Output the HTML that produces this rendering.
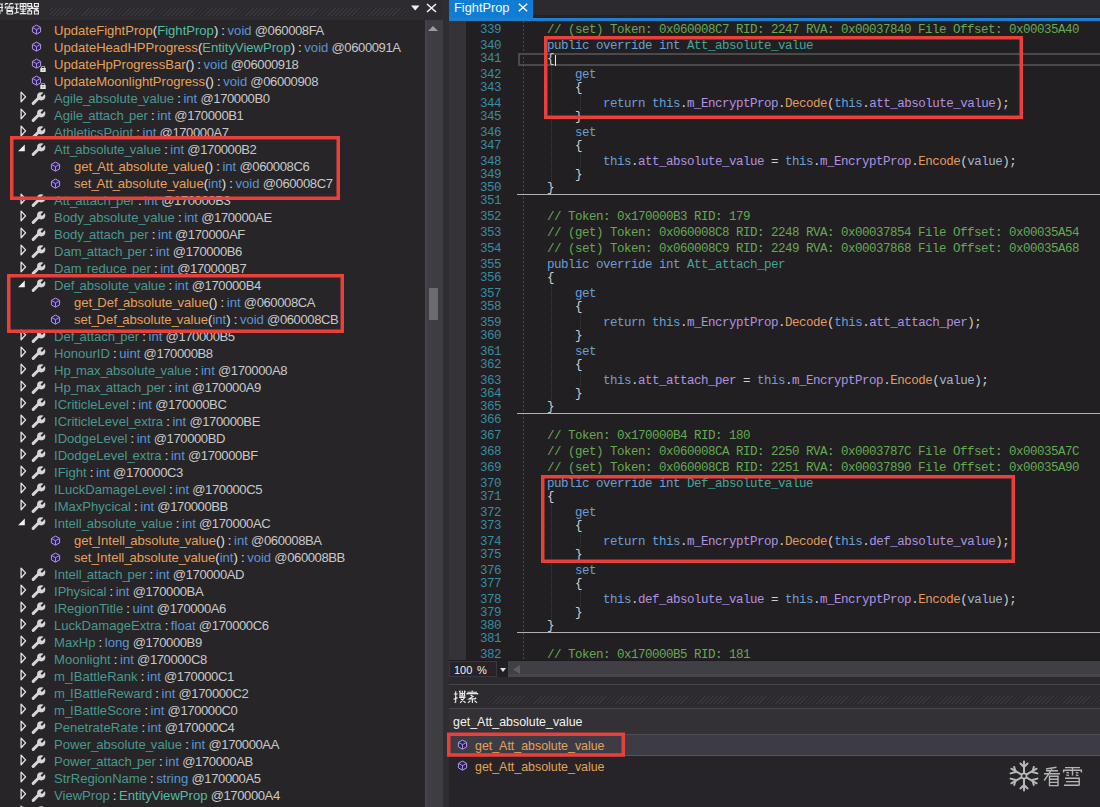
<!DOCTYPE html>
<html><head><meta charset="utf-8"><style>
html,body{margin:0;padding:0}
body{width:1100px;height:807px;overflow:hidden;position:relative;background:#272528;font-family:"Liberation Sans",sans-serif}
.a{position:absolute}
svg{display:block}
.tr{position:absolute;height:17px;line-height:17px;font-size:12.4px;white-space:pre;color:#E0E0E0;transform:scaleX(1.055);transform-origin:0 0}
.u{letter-spacing:-2px} .tk{letter-spacing:-0.4px} .co{letter-spacing:-0.5px}
.p{color:#4A988E} .m{color:#E5A15A} .k{color:#5A95D6} .t{color:#55BBA2} .n{color:#C8C8C8} .w{color:#E0E0E0}
.cl{position:absolute;left:0;width:651px;font-family:"Liberation Mono",monospace;font-size:12.5px;letter-spacing:-0.5px;line-height:12px;white-space:pre}
.cl.t{padding-top:3px;box-sizing:border-box}
.lnn{position:absolute;left:30px;width:22px;text-align:right;color:#3A8CA3}
.ct{position:absolute;left:98px}
.cm{color:#66A853} .kw{color:#6A9FD2} .pp{color:#45A597} .pu{color:#CFCFCF} .fd{color:#B092E0} .me{color:#E39C5E} .va{color:#A0B4C8}
</style></head><body>
<!-- left title -->
<div class="a" style="left:0;top:0;width:443px;height:20px;background:#2D2B30"></div>
<svg class="a" style="left:0;top:0" width="42" height="18" viewBox="0 0 42 18"><g fill="none" stroke="#EDEDED" stroke-width="1.15">
<path d="M0 4 H3 M0 7.5 H3 M2 4 V11 M0 11 H3 M0.5 12.5 L-0.5 14"/>
<path d="M6 3 L5 5 M6 3.6 H8.2 M10.5 3 L9.5 5 M10.5 3.6 H13.2 M9.2 5.2 V6.5 M5.3 8.5 V7 H13.3 V8.5 M7 8.2 V14 M7 8.2 H12 V10.6 H7 M7 11.3 H12.6 V14 H7"/>
<path d="M14.6 4 H18.8 M14.8 8.3 H18.6 M16.7 4 V12.6 M14.5 13.4 L19 12 M20.2 3.6 H26 V9.2 H20.2 Z M20.2 6.4 H26 M23.1 3.6 V13.6 M20.6 11.2 H25.6 M19.8 13.6 H26.6"/>
<path d="M27.8 3.5 H31.6 V6.4 H27.8 Z M34.4 3.5 H38.4 V6.4 H34.4 Z M27.3 8.3 H38.7 M33 6.8 L28.6 10.2 M33.4 8.4 L38.2 10.2 M36.4 6.6 L37.4 7.4 M27.8 10.8 H31.6 V14 H27.8 Z M34.4 10.8 H38.4 V14 H34.4 Z"/>
</g></svg>
<div class="a" style="left:50px;top:8px;width:356px;height:8px;background-image:repeating-linear-gradient(-45deg,#39373C 0 1.2px,#2A282D 1.2px 2.9px);"></div>
<svg class="a" style="left:411px;top:5px" width="9" height="6" viewBox="0 0 9 6"><path d="M0 0.5 H8.5 L4.25 5.5 Z" fill="#F0F0F0"/></svg>
<svg class="a" style="left:426px;top:3px" width="11" height="10" viewBox="0 0 11 10"><path d="M1 1 L10 9 M10 1 L1 9" stroke="#F0F0F0" stroke-width="1.6"/></svg>
<!-- tree -->
<div class="a" style="left:0;top:20px;width:425px;height:787px;overflow:hidden">
<div class="a" style="left:0;top:-20px;width:425px;height:807px"><div class="a" style="left:31px;top:24px"><svg class="ic" width="11" height="11" viewBox="0 0 11 11"><path d="M5.5 1.1 L9.6 3.4 L9.6 7.9 L5.5 10.2 L1.4 7.9 L1.4 3.4 Z" fill="#2F1E5E" stroke="#B39AE4" stroke-width="1"/><path d="M1.8 3.6 L5.5 5.7 L9.2 3.6 M5.5 5.7 L5.5 9.8" fill="none" stroke="#B39AE4" stroke-width="0.9"/></svg></div><div class="tr" style="left:54px;top:23px"><span class="m">UpdateFightProp</span><span class="w">(</span><span class="t">FightProp</span><span class="w">)</span><span class="w co"> : </span><span class="k">void</span><span class="n tk"> @060008FA</span></div><div class="a" style="left:31px;top:41px"><svg class="ic" width="11" height="11" viewBox="0 0 11 11"><path d="M5.5 1.1 L9.6 3.4 L9.6 7.9 L5.5 10.2 L1.4 7.9 L1.4 3.4 Z" fill="#2F1E5E" stroke="#B39AE4" stroke-width="1"/><path d="M1.8 3.6 L5.5 5.7 L9.2 3.6 M5.5 5.7 L5.5 9.8" fill="none" stroke="#B39AE4" stroke-width="0.9"/></svg></div><div class="tr" style="left:54px;top:40px"><span class="m">UpdateHeadHPProgress</span><span class="w">(</span><span class="t">EntityViewProp</span><span class="w">)</span><span class="w co"> : </span><span class="k">void</span><span class="n tk"> @0600091A</span></div><div class="a" style="left:31px;top:58px"><svg class="ic" width="11" height="11" viewBox="0 0 11 11"><path d="M5.5 1.1 L9.6 3.4 L9.6 7.9 L5.5 10.2 L1.4 7.9 L1.4 3.4 Z" fill="#2F1E5E" stroke="#B39AE4" stroke-width="1"/><path d="M1.8 3.6 L5.5 5.7 L9.2 3.6 M5.5 5.7 L5.5 9.8" fill="none" stroke="#B39AE4" stroke-width="0.9"/></svg></div><div class="a" style="left:40px;top:66px"><svg width="6" height="6" viewBox="0 0 6 6"><rect x="0.3" y="2" width="5.4" height="4" fill="#E6E6E6"/><path d="M1.4 2.2 V1.4 A1.6 1.4 0 0 1 4.6 1.4 V2.2" fill="none" stroke="#E6E6E6" stroke-width="0.9"/><rect x="2.5" y="3.4" width="1" height="1" fill="#333"/></svg></div><div class="tr" style="left:54px;top:57px"><span class="m">UpdateHpProgressBar</span><span class="w">()</span><span class="w co"> : </span><span class="k">void</span><span class="n tk"> @06000918</span></div><div class="a" style="left:31px;top:75px"><svg class="ic" width="11" height="11" viewBox="0 0 11 11"><path d="M5.5 1.1 L9.6 3.4 L9.6 7.9 L5.5 10.2 L1.4 7.9 L1.4 3.4 Z" fill="#2F1E5E" stroke="#B39AE4" stroke-width="1"/><path d="M1.8 3.6 L5.5 5.7 L9.2 3.6 M5.5 5.7 L5.5 9.8" fill="none" stroke="#B39AE4" stroke-width="0.9"/></svg></div><div class="a" style="left:40px;top:83px"><svg width="6" height="6" viewBox="0 0 6 6"><rect x="0.3" y="2" width="5.4" height="4" fill="#E6E6E6"/><path d="M1.4 2.2 V1.4 A1.6 1.4 0 0 1 4.6 1.4 V2.2" fill="none" stroke="#E6E6E6" stroke-width="0.9"/><rect x="2.5" y="3.4" width="1" height="1" fill="#333"/></svg></div><div class="tr" style="left:54px;top:74px"><span class="m">UpdateMoonlightProgress</span><span class="w">()</span><span class="w co"> : </span><span class="k">void</span><span class="n tk"> @06000908</span></div><div class="a" style="left:20px;top:91px"><svg width="7" height="12" viewBox="0 0 7 12"><path d="M1.1 1.1 L5.6 5.9 L1.1 10.7 Z" fill="none" stroke="#E8E8E8" stroke-width="1.3" stroke-linejoin="round"/></svg></div><div class="a" style="left:31px;top:91px"><svg width="15" height="15" viewBox="0 0 15 15"><path d="M2.2 12.4 L7.6 7" stroke="#D6D6D6" stroke-width="3.1" stroke-linecap="round"/><circle cx="10.2" cy="5.3" r="4.1" fill="#D6D6D6"/><path d="M10.3 5.2 L14.8 0.7" stroke="#272528" stroke-width="2"/></svg></div><div class="tr" style="left:54px;top:91px"><span class="p">Agile<span class="u">_</span>absolute<span class="u">_</span>value</span><span class="w co"> : </span><span class="k">int</span><span class="n tk"> @170000B0</span></div><div class="a" style="left:20px;top:108px"><svg width="7" height="12" viewBox="0 0 7 12"><path d="M1.1 1.1 L5.6 5.9 L1.1 10.7 Z" fill="none" stroke="#E8E8E8" stroke-width="1.3" stroke-linejoin="round"/></svg></div><div class="a" style="left:31px;top:108px"><svg width="15" height="15" viewBox="0 0 15 15"><path d="M2.2 12.4 L7.6 7" stroke="#D6D6D6" stroke-width="3.1" stroke-linecap="round"/><circle cx="10.2" cy="5.3" r="4.1" fill="#D6D6D6"/><path d="M10.3 5.2 L14.8 0.7" stroke="#272528" stroke-width="2"/></svg></div><div class="tr" style="left:54px;top:108px"><span class="p">Agile<span class="u">_</span>attach<span class="u">_</span>per</span><span class="w co"> : </span><span class="k">int</span><span class="n tk"> @170000B1</span></div><div class="a" style="left:20px;top:125px"><svg width="7" height="12" viewBox="0 0 7 12"><path d="M1.1 1.1 L5.6 5.9 L1.1 10.7 Z" fill="none" stroke="#E8E8E8" stroke-width="1.3" stroke-linejoin="round"/></svg></div><div class="a" style="left:31px;top:125px"><svg width="15" height="15" viewBox="0 0 15 15"><path d="M2.2 12.4 L7.6 7" stroke="#D6D6D6" stroke-width="3.1" stroke-linecap="round"/><circle cx="10.2" cy="5.3" r="4.1" fill="#D6D6D6"/><path d="M10.3 5.2 L14.8 0.7" stroke="#272528" stroke-width="2"/></svg></div><div class="tr" style="left:54px;top:125px"><span class="p">AthleticsPoint</span><span class="w co"> : </span><span class="k">int</span><span class="n tk"> @170000A7</span></div><div class="a" style="left:18px;top:143.5px"><svg width="8" height="8" viewBox="0 0 8 8"><path d="M6.8 0.5 L6.8 7.2 L0.1 7.2 Z" fill="#F2F2F2"/></svg></div><div class="a" style="left:31px;top:142px"><svg width="15" height="15" viewBox="0 0 15 15"><path d="M2.2 12.4 L7.6 7" stroke="#D6D6D6" stroke-width="3.1" stroke-linecap="round"/><circle cx="10.2" cy="5.3" r="4.1" fill="#D6D6D6"/><path d="M10.3 5.2 L14.8 0.7" stroke="#272528" stroke-width="2"/></svg></div><div class="tr" style="left:54px;top:142px"><span class="p">Att<span class="u">_</span>absolute<span class="u">_</span>value</span><span class="w co"> : </span><span class="k">int</span><span class="n tk"> @170000B2</span></div><div class="a" style="left:50px;top:161px"><svg class="ic" width="11" height="11" viewBox="0 0 11 11"><path d="M5.5 1.1 L9.6 3.4 L9.6 7.9 L5.5 10.2 L1.4 7.9 L1.4 3.4 Z" fill="#2F1E5E" stroke="#B39AE4" stroke-width="1"/><path d="M1.8 3.6 L5.5 5.7 L9.2 3.6 M5.5 5.7 L5.5 9.8" fill="none" stroke="#B39AE4" stroke-width="0.9"/></svg></div><div class="tr" style="left:74px;top:159px"><span class="m">get<span class="u">_</span>Att<span class="u">_</span>absolute<span class="u">_</span>value</span><span class="w">()</span><span class="w co"> : </span><span class="k">int</span><span class="n tk"> @060008C6</span></div><div class="a" style="left:50px;top:178px"><svg class="ic" width="11" height="11" viewBox="0 0 11 11"><path d="M5.5 1.1 L9.6 3.4 L9.6 7.9 L5.5 10.2 L1.4 7.9 L1.4 3.4 Z" fill="#2F1E5E" stroke="#B39AE4" stroke-width="1"/><path d="M1.8 3.6 L5.5 5.7 L9.2 3.6 M5.5 5.7 L5.5 9.8" fill="none" stroke="#B39AE4" stroke-width="0.9"/></svg></div><div class="tr" style="left:74px;top:176px"><span class="m">set<span class="u">_</span>Att<span class="u">_</span>absolute<span class="u">_</span>value</span><span class="w">(</span><span class="k">int</span><span class="w">)</span><span class="w co"> : </span><span class="k">void</span><span class="n tk"> @060008C7</span></div><div class="a" style="left:20px;top:193px"><svg width="7" height="12" viewBox="0 0 7 12"><path d="M1.1 1.1 L5.6 5.9 L1.1 10.7 Z" fill="none" stroke="#E8E8E8" stroke-width="1.3" stroke-linejoin="round"/></svg></div><div class="a" style="left:31px;top:193px"><svg width="15" height="15" viewBox="0 0 15 15"><path d="M2.2 12.4 L7.6 7" stroke="#D6D6D6" stroke-width="3.1" stroke-linecap="round"/><circle cx="10.2" cy="5.3" r="4.1" fill="#D6D6D6"/><path d="M10.3 5.2 L14.8 0.7" stroke="#272528" stroke-width="2"/></svg></div><div class="tr" style="left:54px;top:193px"><span class="p">Att<span class="u">_</span>attach<span class="u">_</span>per</span><span class="w co"> : </span><span class="k">int</span><span class="n tk"> @170000B3</span></div><div class="a" style="left:20px;top:210px"><svg width="7" height="12" viewBox="0 0 7 12"><path d="M1.1 1.1 L5.6 5.9 L1.1 10.7 Z" fill="none" stroke="#E8E8E8" stroke-width="1.3" stroke-linejoin="round"/></svg></div><div class="a" style="left:31px;top:210px"><svg width="15" height="15" viewBox="0 0 15 15"><path d="M2.2 12.4 L7.6 7" stroke="#D6D6D6" stroke-width="3.1" stroke-linecap="round"/><circle cx="10.2" cy="5.3" r="4.1" fill="#D6D6D6"/><path d="M10.3 5.2 L14.8 0.7" stroke="#272528" stroke-width="2"/></svg></div><div class="tr" style="left:54px;top:210px"><span class="p">Body<span class="u">_</span>absolute<span class="u">_</span>value</span><span class="w co"> : </span><span class="k">int</span><span class="n tk"> @170000AE</span></div><div class="a" style="left:20px;top:227px"><svg width="7" height="12" viewBox="0 0 7 12"><path d="M1.1 1.1 L5.6 5.9 L1.1 10.7 Z" fill="none" stroke="#E8E8E8" stroke-width="1.3" stroke-linejoin="round"/></svg></div><div class="a" style="left:31px;top:227px"><svg width="15" height="15" viewBox="0 0 15 15"><path d="M2.2 12.4 L7.6 7" stroke="#D6D6D6" stroke-width="3.1" stroke-linecap="round"/><circle cx="10.2" cy="5.3" r="4.1" fill="#D6D6D6"/><path d="M10.3 5.2 L14.8 0.7" stroke="#272528" stroke-width="2"/></svg></div><div class="tr" style="left:54px;top:227px"><span class="p">Body<span class="u">_</span>attach<span class="u">_</span>per</span><span class="w co"> : </span><span class="k">int</span><span class="n tk"> @170000AF</span></div><div class="a" style="left:20px;top:244px"><svg width="7" height="12" viewBox="0 0 7 12"><path d="M1.1 1.1 L5.6 5.9 L1.1 10.7 Z" fill="none" stroke="#E8E8E8" stroke-width="1.3" stroke-linejoin="round"/></svg></div><div class="a" style="left:31px;top:244px"><svg width="15" height="15" viewBox="0 0 15 15"><path d="M2.2 12.4 L7.6 7" stroke="#D6D6D6" stroke-width="3.1" stroke-linecap="round"/><circle cx="10.2" cy="5.3" r="4.1" fill="#D6D6D6"/><path d="M10.3 5.2 L14.8 0.7" stroke="#272528" stroke-width="2"/></svg></div><div class="tr" style="left:54px;top:244px"><span class="p">Dam<span class="u">_</span>attach<span class="u">_</span>per</span><span class="w co"> : </span><span class="k">int</span><span class="n tk"> @170000B6</span></div><div class="a" style="left:20px;top:261px"><svg width="7" height="12" viewBox="0 0 7 12"><path d="M1.1 1.1 L5.6 5.9 L1.1 10.7 Z" fill="none" stroke="#E8E8E8" stroke-width="1.3" stroke-linejoin="round"/></svg></div><div class="a" style="left:31px;top:261px"><svg width="15" height="15" viewBox="0 0 15 15"><path d="M2.2 12.4 L7.6 7" stroke="#D6D6D6" stroke-width="3.1" stroke-linecap="round"/><circle cx="10.2" cy="5.3" r="4.1" fill="#D6D6D6"/><path d="M10.3 5.2 L14.8 0.7" stroke="#272528" stroke-width="2"/></svg></div><div class="tr" style="left:54px;top:261px"><span class="p">Dam<span class="u">_</span>reduce<span class="u">_</span>per</span><span class="w co"> : </span><span class="k">int</span><span class="n tk"> @170000B7</span></div><div class="a" style="left:18px;top:279.5px"><svg width="8" height="8" viewBox="0 0 8 8"><path d="M6.8 0.5 L6.8 7.2 L0.1 7.2 Z" fill="#F2F2F2"/></svg></div><div class="a" style="left:31px;top:278px"><svg width="15" height="15" viewBox="0 0 15 15"><path d="M2.2 12.4 L7.6 7" stroke="#D6D6D6" stroke-width="3.1" stroke-linecap="round"/><circle cx="10.2" cy="5.3" r="4.1" fill="#D6D6D6"/><path d="M10.3 5.2 L14.8 0.7" stroke="#272528" stroke-width="2"/></svg></div><div class="tr" style="left:54px;top:278px"><span class="p">Def<span class="u">_</span>absolute<span class="u">_</span>value</span><span class="w co"> : </span><span class="k">int</span><span class="n tk"> @170000B4</span></div><div class="a" style="left:50px;top:297px"><svg class="ic" width="11" height="11" viewBox="0 0 11 11"><path d="M5.5 1.1 L9.6 3.4 L9.6 7.9 L5.5 10.2 L1.4 7.9 L1.4 3.4 Z" fill="#2F1E5E" stroke="#B39AE4" stroke-width="1"/><path d="M1.8 3.6 L5.5 5.7 L9.2 3.6 M5.5 5.7 L5.5 9.8" fill="none" stroke="#B39AE4" stroke-width="0.9"/></svg></div><div class="tr" style="left:74px;top:295px"><span class="m">get<span class="u">_</span>Def<span class="u">_</span>absolute<span class="u">_</span>value</span><span class="w">()</span><span class="w co"> : </span><span class="k">int</span><span class="n tk"> @060008CA</span></div><div class="a" style="left:50px;top:314px"><svg class="ic" width="11" height="11" viewBox="0 0 11 11"><path d="M5.5 1.1 L9.6 3.4 L9.6 7.9 L5.5 10.2 L1.4 7.9 L1.4 3.4 Z" fill="#2F1E5E" stroke="#B39AE4" stroke-width="1"/><path d="M1.8 3.6 L5.5 5.7 L9.2 3.6 M5.5 5.7 L5.5 9.8" fill="none" stroke="#B39AE4" stroke-width="0.9"/></svg></div><div class="tr" style="left:74px;top:312px"><span class="m">set<span class="u">_</span>Def<span class="u">_</span>absolute<span class="u">_</span>value</span><span class="w">(</span><span class="k">int</span><span class="w">)</span><span class="w co"> : </span><span class="k">void</span><span class="n tk"> @060008CB</span></div><div class="a" style="left:20px;top:329px"><svg width="7" height="12" viewBox="0 0 7 12"><path d="M1.1 1.1 L5.6 5.9 L1.1 10.7 Z" fill="none" stroke="#E8E8E8" stroke-width="1.3" stroke-linejoin="round"/></svg></div><div class="a" style="left:31px;top:329px"><svg width="15" height="15" viewBox="0 0 15 15"><path d="M2.2 12.4 L7.6 7" stroke="#D6D6D6" stroke-width="3.1" stroke-linecap="round"/><circle cx="10.2" cy="5.3" r="4.1" fill="#D6D6D6"/><path d="M10.3 5.2 L14.8 0.7" stroke="#272528" stroke-width="2"/></svg></div><div class="tr" style="left:54px;top:329px"><span class="p">Def<span class="u">_</span>attach<span class="u">_</span>per</span><span class="w co"> : </span><span class="k">int</span><span class="n tk"> @170000B5</span></div><div class="a" style="left:20px;top:346px"><svg width="7" height="12" viewBox="0 0 7 12"><path d="M1.1 1.1 L5.6 5.9 L1.1 10.7 Z" fill="none" stroke="#E8E8E8" stroke-width="1.3" stroke-linejoin="round"/></svg></div><div class="a" style="left:31px;top:346px"><svg width="15" height="15" viewBox="0 0 15 15"><path d="M2.2 12.4 L7.6 7" stroke="#D6D6D6" stroke-width="3.1" stroke-linecap="round"/><circle cx="10.2" cy="5.3" r="4.1" fill="#D6D6D6"/><path d="M10.3 5.2 L14.8 0.7" stroke="#272528" stroke-width="2"/></svg></div><div class="tr" style="left:54px;top:346px"><span class="p">HonourID</span><span class="w co"> : </span><span class="k">uint</span><span class="n tk"> @170000B8</span></div><div class="a" style="left:20px;top:363px"><svg width="7" height="12" viewBox="0 0 7 12"><path d="M1.1 1.1 L5.6 5.9 L1.1 10.7 Z" fill="none" stroke="#E8E8E8" stroke-width="1.3" stroke-linejoin="round"/></svg></div><div class="a" style="left:31px;top:363px"><svg width="15" height="15" viewBox="0 0 15 15"><path d="M2.2 12.4 L7.6 7" stroke="#D6D6D6" stroke-width="3.1" stroke-linecap="round"/><circle cx="10.2" cy="5.3" r="4.1" fill="#D6D6D6"/><path d="M10.3 5.2 L14.8 0.7" stroke="#272528" stroke-width="2"/></svg></div><div class="tr" style="left:54px;top:363px"><span class="p">Hp<span class="u">_</span>max<span class="u">_</span>absolute<span class="u">_</span>value</span><span class="w co"> : </span><span class="k">int</span><span class="n tk"> @170000A8</span></div><div class="a" style="left:20px;top:380px"><svg width="7" height="12" viewBox="0 0 7 12"><path d="M1.1 1.1 L5.6 5.9 L1.1 10.7 Z" fill="none" stroke="#E8E8E8" stroke-width="1.3" stroke-linejoin="round"/></svg></div><div class="a" style="left:31px;top:380px"><svg width="15" height="15" viewBox="0 0 15 15"><path d="M2.2 12.4 L7.6 7" stroke="#D6D6D6" stroke-width="3.1" stroke-linecap="round"/><circle cx="10.2" cy="5.3" r="4.1" fill="#D6D6D6"/><path d="M10.3 5.2 L14.8 0.7" stroke="#272528" stroke-width="2"/></svg></div><div class="tr" style="left:54px;top:380px"><span class="p">Hp<span class="u">_</span>max<span class="u">_</span>attach<span class="u">_</span>per</span><span class="w co"> : </span><span class="k">int</span><span class="n tk"> @170000A9</span></div><div class="a" style="left:20px;top:397px"><svg width="7" height="12" viewBox="0 0 7 12"><path d="M1.1 1.1 L5.6 5.9 L1.1 10.7 Z" fill="none" stroke="#E8E8E8" stroke-width="1.3" stroke-linejoin="round"/></svg></div><div class="a" style="left:31px;top:397px"><svg width="15" height="15" viewBox="0 0 15 15"><path d="M2.2 12.4 L7.6 7" stroke="#D6D6D6" stroke-width="3.1" stroke-linecap="round"/><circle cx="10.2" cy="5.3" r="4.1" fill="#D6D6D6"/><path d="M10.3 5.2 L14.8 0.7" stroke="#272528" stroke-width="2"/></svg></div><div class="tr" style="left:54px;top:397px"><span class="p">ICriticleLevel</span><span class="w co"> : </span><span class="k">int</span><span class="n tk"> @170000BC</span></div><div class="a" style="left:20px;top:414px"><svg width="7" height="12" viewBox="0 0 7 12"><path d="M1.1 1.1 L5.6 5.9 L1.1 10.7 Z" fill="none" stroke="#E8E8E8" stroke-width="1.3" stroke-linejoin="round"/></svg></div><div class="a" style="left:31px;top:414px"><svg width="15" height="15" viewBox="0 0 15 15"><path d="M2.2 12.4 L7.6 7" stroke="#D6D6D6" stroke-width="3.1" stroke-linecap="round"/><circle cx="10.2" cy="5.3" r="4.1" fill="#D6D6D6"/><path d="M10.3 5.2 L14.8 0.7" stroke="#272528" stroke-width="2"/></svg></div><div class="tr" style="left:54px;top:414px"><span class="p">ICriticleLevel<span class="u">_</span>extra</span><span class="w co"> : </span><span class="k">int</span><span class="n tk"> @170000BE</span></div><div class="a" style="left:20px;top:431px"><svg width="7" height="12" viewBox="0 0 7 12"><path d="M1.1 1.1 L5.6 5.9 L1.1 10.7 Z" fill="none" stroke="#E8E8E8" stroke-width="1.3" stroke-linejoin="round"/></svg></div><div class="a" style="left:31px;top:431px"><svg width="15" height="15" viewBox="0 0 15 15"><path d="M2.2 12.4 L7.6 7" stroke="#D6D6D6" stroke-width="3.1" stroke-linecap="round"/><circle cx="10.2" cy="5.3" r="4.1" fill="#D6D6D6"/><path d="M10.3 5.2 L14.8 0.7" stroke="#272528" stroke-width="2"/></svg></div><div class="tr" style="left:54px;top:431px"><span class="p">IDodgeLevel</span><span class="w co"> : </span><span class="k">int</span><span class="n tk"> @170000BD</span></div><div class="a" style="left:20px;top:448px"><svg width="7" height="12" viewBox="0 0 7 12"><path d="M1.1 1.1 L5.6 5.9 L1.1 10.7 Z" fill="none" stroke="#E8E8E8" stroke-width="1.3" stroke-linejoin="round"/></svg></div><div class="a" style="left:31px;top:448px"><svg width="15" height="15" viewBox="0 0 15 15"><path d="M2.2 12.4 L7.6 7" stroke="#D6D6D6" stroke-width="3.1" stroke-linecap="round"/><circle cx="10.2" cy="5.3" r="4.1" fill="#D6D6D6"/><path d="M10.3 5.2 L14.8 0.7" stroke="#272528" stroke-width="2"/></svg></div><div class="tr" style="left:54px;top:448px"><span class="p">IDodgeLevel<span class="u">_</span>extra</span><span class="w co"> : </span><span class="k">int</span><span class="n tk"> @170000BF</span></div><div class="a" style="left:20px;top:465px"><svg width="7" height="12" viewBox="0 0 7 12"><path d="M1.1 1.1 L5.6 5.9 L1.1 10.7 Z" fill="none" stroke="#E8E8E8" stroke-width="1.3" stroke-linejoin="round"/></svg></div><div class="a" style="left:31px;top:465px"><svg width="15" height="15" viewBox="0 0 15 15"><path d="M2.2 12.4 L7.6 7" stroke="#D6D6D6" stroke-width="3.1" stroke-linecap="round"/><circle cx="10.2" cy="5.3" r="4.1" fill="#D6D6D6"/><path d="M10.3 5.2 L14.8 0.7" stroke="#272528" stroke-width="2"/></svg></div><div class="tr" style="left:54px;top:465px"><span class="p">IFight</span><span class="w co"> : </span><span class="k">int</span><span class="n tk"> @170000C3</span></div><div class="a" style="left:20px;top:482px"><svg width="7" height="12" viewBox="0 0 7 12"><path d="M1.1 1.1 L5.6 5.9 L1.1 10.7 Z" fill="none" stroke="#E8E8E8" stroke-width="1.3" stroke-linejoin="round"/></svg></div><div class="a" style="left:31px;top:482px"><svg width="15" height="15" viewBox="0 0 15 15"><path d="M2.2 12.4 L7.6 7" stroke="#D6D6D6" stroke-width="3.1" stroke-linecap="round"/><circle cx="10.2" cy="5.3" r="4.1" fill="#D6D6D6"/><path d="M10.3 5.2 L14.8 0.7" stroke="#272528" stroke-width="2"/></svg></div><div class="tr" style="left:54px;top:482px"><span class="p">ILuckDamageLevel</span><span class="w co"> : </span><span class="k">int</span><span class="n tk"> @170000C5</span></div><div class="a" style="left:20px;top:499px"><svg width="7" height="12" viewBox="0 0 7 12"><path d="M1.1 1.1 L5.6 5.9 L1.1 10.7 Z" fill="none" stroke="#E8E8E8" stroke-width="1.3" stroke-linejoin="round"/></svg></div><div class="a" style="left:31px;top:499px"><svg width="15" height="15" viewBox="0 0 15 15"><path d="M2.2 12.4 L7.6 7" stroke="#D6D6D6" stroke-width="3.1" stroke-linecap="round"/><circle cx="10.2" cy="5.3" r="4.1" fill="#D6D6D6"/><path d="M10.3 5.2 L14.8 0.7" stroke="#272528" stroke-width="2"/></svg></div><div class="tr" style="left:54px;top:499px"><span class="p">IMaxPhycical</span><span class="w co"> : </span><span class="k">int</span><span class="n tk"> @170000BB</span></div><div class="a" style="left:18px;top:517.5px"><svg width="8" height="8" viewBox="0 0 8 8"><path d="M6.8 0.5 L6.8 7.2 L0.1 7.2 Z" fill="#F2F2F2"/></svg></div><div class="a" style="left:31px;top:516px"><svg width="15" height="15" viewBox="0 0 15 15"><path d="M2.2 12.4 L7.6 7" stroke="#D6D6D6" stroke-width="3.1" stroke-linecap="round"/><circle cx="10.2" cy="5.3" r="4.1" fill="#D6D6D6"/><path d="M10.3 5.2 L14.8 0.7" stroke="#272528" stroke-width="2"/></svg></div><div class="tr" style="left:54px;top:516px"><span class="p">Intell<span class="u">_</span>absolute<span class="u">_</span>value</span><span class="w co"> : </span><span class="k">int</span><span class="n tk"> @170000AC</span></div><div class="a" style="left:50px;top:535px"><svg class="ic" width="11" height="11" viewBox="0 0 11 11"><path d="M5.5 1.1 L9.6 3.4 L9.6 7.9 L5.5 10.2 L1.4 7.9 L1.4 3.4 Z" fill="#2F1E5E" stroke="#B39AE4" stroke-width="1"/><path d="M1.8 3.6 L5.5 5.7 L9.2 3.6 M5.5 5.7 L5.5 9.8" fill="none" stroke="#B39AE4" stroke-width="0.9"/></svg></div><div class="tr" style="left:74px;top:533px"><span class="m">get<span class="u">_</span>Intell<span class="u">_</span>absolute<span class="u">_</span>value</span><span class="w">()</span><span class="w co"> : </span><span class="k">int</span><span class="n tk"> @060008BA</span></div><div class="a" style="left:50px;top:552px"><svg class="ic" width="11" height="11" viewBox="0 0 11 11"><path d="M5.5 1.1 L9.6 3.4 L9.6 7.9 L5.5 10.2 L1.4 7.9 L1.4 3.4 Z" fill="#2F1E5E" stroke="#B39AE4" stroke-width="1"/><path d="M1.8 3.6 L5.5 5.7 L9.2 3.6 M5.5 5.7 L5.5 9.8" fill="none" stroke="#B39AE4" stroke-width="0.9"/></svg></div><div class="tr" style="left:74px;top:550px"><span class="m">set<span class="u">_</span>Intell<span class="u">_</span>absolute<span class="u">_</span>value</span><span class="w">(</span><span class="k">int</span><span class="w">)</span><span class="w co"> : </span><span class="k">void</span><span class="n tk"> @060008BB</span></div><div class="a" style="left:20px;top:567px"><svg width="7" height="12" viewBox="0 0 7 12"><path d="M1.1 1.1 L5.6 5.9 L1.1 10.7 Z" fill="none" stroke="#E8E8E8" stroke-width="1.3" stroke-linejoin="round"/></svg></div><div class="a" style="left:31px;top:567px"><svg width="15" height="15" viewBox="0 0 15 15"><path d="M2.2 12.4 L7.6 7" stroke="#D6D6D6" stroke-width="3.1" stroke-linecap="round"/><circle cx="10.2" cy="5.3" r="4.1" fill="#D6D6D6"/><path d="M10.3 5.2 L14.8 0.7" stroke="#272528" stroke-width="2"/></svg></div><div class="tr" style="left:54px;top:567px"><span class="p">Intell<span class="u">_</span>attach<span class="u">_</span>per</span><span class="w co"> : </span><span class="k">int</span><span class="n tk"> @170000AD</span></div><div class="a" style="left:20px;top:584px"><svg width="7" height="12" viewBox="0 0 7 12"><path d="M1.1 1.1 L5.6 5.9 L1.1 10.7 Z" fill="none" stroke="#E8E8E8" stroke-width="1.3" stroke-linejoin="round"/></svg></div><div class="a" style="left:31px;top:584px"><svg width="15" height="15" viewBox="0 0 15 15"><path d="M2.2 12.4 L7.6 7" stroke="#D6D6D6" stroke-width="3.1" stroke-linecap="round"/><circle cx="10.2" cy="5.3" r="4.1" fill="#D6D6D6"/><path d="M10.3 5.2 L14.8 0.7" stroke="#272528" stroke-width="2"/></svg></div><div class="tr" style="left:54px;top:584px"><span class="p">IPhysical</span><span class="w co"> : </span><span class="k">int</span><span class="n tk"> @170000BA</span></div><div class="a" style="left:20px;top:601px"><svg width="7" height="12" viewBox="0 0 7 12"><path d="M1.1 1.1 L5.6 5.9 L1.1 10.7 Z" fill="none" stroke="#E8E8E8" stroke-width="1.3" stroke-linejoin="round"/></svg></div><div class="a" style="left:31px;top:601px"><svg width="15" height="15" viewBox="0 0 15 15"><path d="M2.2 12.4 L7.6 7" stroke="#D6D6D6" stroke-width="3.1" stroke-linecap="round"/><circle cx="10.2" cy="5.3" r="4.1" fill="#D6D6D6"/><path d="M10.3 5.2 L14.8 0.7" stroke="#272528" stroke-width="2"/></svg></div><div class="tr" style="left:54px;top:601px"><span class="p">IRegionTitle</span><span class="w co"> : </span><span class="k">uint</span><span class="n tk"> @170000A6</span></div><div class="a" style="left:20px;top:618px"><svg width="7" height="12" viewBox="0 0 7 12"><path d="M1.1 1.1 L5.6 5.9 L1.1 10.7 Z" fill="none" stroke="#E8E8E8" stroke-width="1.3" stroke-linejoin="round"/></svg></div><div class="a" style="left:31px;top:618px"><svg width="15" height="15" viewBox="0 0 15 15"><path d="M2.2 12.4 L7.6 7" stroke="#D6D6D6" stroke-width="3.1" stroke-linecap="round"/><circle cx="10.2" cy="5.3" r="4.1" fill="#D6D6D6"/><path d="M10.3 5.2 L14.8 0.7" stroke="#272528" stroke-width="2"/></svg></div><div class="tr" style="left:54px;top:618px"><span class="p">LuckDamageExtra</span><span class="w co"> : </span><span class="k">float</span><span class="n tk"> @170000C6</span></div><div class="a" style="left:20px;top:635px"><svg width="7" height="12" viewBox="0 0 7 12"><path d="M1.1 1.1 L5.6 5.9 L1.1 10.7 Z" fill="none" stroke="#E8E8E8" stroke-width="1.3" stroke-linejoin="round"/></svg></div><div class="a" style="left:31px;top:635px"><svg width="15" height="15" viewBox="0 0 15 15"><path d="M2.2 12.4 L7.6 7" stroke="#D6D6D6" stroke-width="3.1" stroke-linecap="round"/><circle cx="10.2" cy="5.3" r="4.1" fill="#D6D6D6"/><path d="M10.3 5.2 L14.8 0.7" stroke="#272528" stroke-width="2"/></svg></div><div class="tr" style="left:54px;top:635px"><span class="p">MaxHp</span><span class="w co"> : </span><span class="k">long</span><span class="n tk"> @170000B9</span></div><div class="a" style="left:20px;top:652px"><svg width="7" height="12" viewBox="0 0 7 12"><path d="M1.1 1.1 L5.6 5.9 L1.1 10.7 Z" fill="none" stroke="#E8E8E8" stroke-width="1.3" stroke-linejoin="round"/></svg></div><div class="a" style="left:31px;top:652px"><svg width="15" height="15" viewBox="0 0 15 15"><path d="M2.2 12.4 L7.6 7" stroke="#D6D6D6" stroke-width="3.1" stroke-linecap="round"/><circle cx="10.2" cy="5.3" r="4.1" fill="#D6D6D6"/><path d="M10.3 5.2 L14.8 0.7" stroke="#272528" stroke-width="2"/></svg></div><div class="tr" style="left:54px;top:652px"><span class="p">Moonlight</span><span class="w co"> : </span><span class="k">int</span><span class="n tk"> @170000C8</span></div><div class="a" style="left:20px;top:669px"><svg width="7" height="12" viewBox="0 0 7 12"><path d="M1.1 1.1 L5.6 5.9 L1.1 10.7 Z" fill="none" stroke="#E8E8E8" stroke-width="1.3" stroke-linejoin="round"/></svg></div><div class="a" style="left:31px;top:669px"><svg width="15" height="15" viewBox="0 0 15 15"><path d="M2.2 12.4 L7.6 7" stroke="#D6D6D6" stroke-width="3.1" stroke-linecap="round"/><circle cx="10.2" cy="5.3" r="4.1" fill="#D6D6D6"/><path d="M10.3 5.2 L14.8 0.7" stroke="#272528" stroke-width="2"/></svg></div><div class="tr" style="left:54px;top:669px"><span class="p">m<span class="u">_</span>IBattleRank</span><span class="w co"> : </span><span class="k">int</span><span class="n tk"> @170000C1</span></div><div class="a" style="left:20px;top:686px"><svg width="7" height="12" viewBox="0 0 7 12"><path d="M1.1 1.1 L5.6 5.9 L1.1 10.7 Z" fill="none" stroke="#E8E8E8" stroke-width="1.3" stroke-linejoin="round"/></svg></div><div class="a" style="left:31px;top:686px"><svg width="15" height="15" viewBox="0 0 15 15"><path d="M2.2 12.4 L7.6 7" stroke="#D6D6D6" stroke-width="3.1" stroke-linecap="round"/><circle cx="10.2" cy="5.3" r="4.1" fill="#D6D6D6"/><path d="M10.3 5.2 L14.8 0.7" stroke="#272528" stroke-width="2"/></svg></div><div class="tr" style="left:54px;top:686px"><span class="p">m<span class="u">_</span>IBattleReward</span><span class="w co"> : </span><span class="k">int</span><span class="n tk"> @170000C2</span></div><div class="a" style="left:20px;top:703px"><svg width="7" height="12" viewBox="0 0 7 12"><path d="M1.1 1.1 L5.6 5.9 L1.1 10.7 Z" fill="none" stroke="#E8E8E8" stroke-width="1.3" stroke-linejoin="round"/></svg></div><div class="a" style="left:31px;top:703px"><svg width="15" height="15" viewBox="0 0 15 15"><path d="M2.2 12.4 L7.6 7" stroke="#D6D6D6" stroke-width="3.1" stroke-linecap="round"/><circle cx="10.2" cy="5.3" r="4.1" fill="#D6D6D6"/><path d="M10.3 5.2 L14.8 0.7" stroke="#272528" stroke-width="2"/></svg></div><div class="tr" style="left:54px;top:703px"><span class="p">m<span class="u">_</span>IBattleScore</span><span class="w co"> : </span><span class="k">int</span><span class="n tk"> @170000C0</span></div><div class="a" style="left:20px;top:720px"><svg width="7" height="12" viewBox="0 0 7 12"><path d="M1.1 1.1 L5.6 5.9 L1.1 10.7 Z" fill="none" stroke="#E8E8E8" stroke-width="1.3" stroke-linejoin="round"/></svg></div><div class="a" style="left:31px;top:720px"><svg width="15" height="15" viewBox="0 0 15 15"><path d="M2.2 12.4 L7.6 7" stroke="#D6D6D6" stroke-width="3.1" stroke-linecap="round"/><circle cx="10.2" cy="5.3" r="4.1" fill="#D6D6D6"/><path d="M10.3 5.2 L14.8 0.7" stroke="#272528" stroke-width="2"/></svg></div><div class="tr" style="left:54px;top:720px"><span class="p">PenetrateRate</span><span class="w co"> : </span><span class="k">int</span><span class="n tk"> @170000C4</span></div><div class="a" style="left:20px;top:737px"><svg width="7" height="12" viewBox="0 0 7 12"><path d="M1.1 1.1 L5.6 5.9 L1.1 10.7 Z" fill="none" stroke="#E8E8E8" stroke-width="1.3" stroke-linejoin="round"/></svg></div><div class="a" style="left:31px;top:737px"><svg width="15" height="15" viewBox="0 0 15 15"><path d="M2.2 12.4 L7.6 7" stroke="#D6D6D6" stroke-width="3.1" stroke-linecap="round"/><circle cx="10.2" cy="5.3" r="4.1" fill="#D6D6D6"/><path d="M10.3 5.2 L14.8 0.7" stroke="#272528" stroke-width="2"/></svg></div><div class="tr" style="left:54px;top:737px"><span class="p">Power<span class="u">_</span>absolute<span class="u">_</span>value</span><span class="w co"> : </span><span class="k">int</span><span class="n tk"> @170000AA</span></div><div class="a" style="left:20px;top:754px"><svg width="7" height="12" viewBox="0 0 7 12"><path d="M1.1 1.1 L5.6 5.9 L1.1 10.7 Z" fill="none" stroke="#E8E8E8" stroke-width="1.3" stroke-linejoin="round"/></svg></div><div class="a" style="left:31px;top:754px"><svg width="15" height="15" viewBox="0 0 15 15"><path d="M2.2 12.4 L7.6 7" stroke="#D6D6D6" stroke-width="3.1" stroke-linecap="round"/><circle cx="10.2" cy="5.3" r="4.1" fill="#D6D6D6"/><path d="M10.3 5.2 L14.8 0.7" stroke="#272528" stroke-width="2"/></svg></div><div class="tr" style="left:54px;top:754px"><span class="p">Power<span class="u">_</span>attach<span class="u">_</span>per</span><span class="w co"> : </span><span class="k">int</span><span class="n tk"> @170000AB</span></div><div class="a" style="left:20px;top:771px"><svg width="7" height="12" viewBox="0 0 7 12"><path d="M1.1 1.1 L5.6 5.9 L1.1 10.7 Z" fill="none" stroke="#E8E8E8" stroke-width="1.3" stroke-linejoin="round"/></svg></div><div class="a" style="left:31px;top:771px"><svg width="15" height="15" viewBox="0 0 15 15"><path d="M2.2 12.4 L7.6 7" stroke="#D6D6D6" stroke-width="3.1" stroke-linecap="round"/><circle cx="10.2" cy="5.3" r="4.1" fill="#D6D6D6"/><path d="M10.3 5.2 L14.8 0.7" stroke="#272528" stroke-width="2"/></svg></div><div class="tr" style="left:54px;top:771px"><span class="p">StrRegionName</span><span class="w co"> : </span><span class="k">string</span><span class="n tk"> @170000A5</span></div><div class="a" style="left:20px;top:788px"><svg width="7" height="12" viewBox="0 0 7 12"><path d="M1.1 1.1 L5.6 5.9 L1.1 10.7 Z" fill="none" stroke="#E8E8E8" stroke-width="1.3" stroke-linejoin="round"/></svg></div><div class="a" style="left:31px;top:788px"><svg width="15" height="15" viewBox="0 0 15 15"><path d="M2.2 12.4 L7.6 7" stroke="#D6D6D6" stroke-width="3.1" stroke-linecap="round"/><circle cx="10.2" cy="5.3" r="4.1" fill="#D6D6D6"/><path d="M10.3 5.2 L14.8 0.7" stroke="#272528" stroke-width="2"/></svg></div><div class="tr" style="left:54px;top:788px"><span class="p">ViewProp</span><span class="w co"> : </span><span class="t">EntityViewProp</span><span class="n tk"> @170000A4</span></div><div class="a" style="left:20px;top:805px"><svg width="7" height="12" viewBox="0 0 7 12"><path d="M1.1 1.1 L5.6 5.9 L1.1 10.7 Z" fill="none" stroke="#E8E8E8" stroke-width="1.3" stroke-linejoin="round"/></svg></div><div class="a" style="left:31px;top:805px"><svg width="15" height="15" viewBox="0 0 15 15"><path d="M2.2 12.4 L7.6 7" stroke="#D6D6D6" stroke-width="3.1" stroke-linecap="round"/><circle cx="10.2" cy="5.3" r="4.1" fill="#D6D6D6"/><path d="M10.3 5.2 L14.8 0.7" stroke="#272528" stroke-width="2"/></svg></div><div class="tr" style="left:54px;top:805px"><span class="p">Vip</span><span class="w co"> : </span><span class="k">int</span><span class="n tk"> @170000A3</span></div></div>
</div>
<!-- tree scrollbar -->
<div class="a" style="left:425px;top:20px;width:18px;height:787px;background:#3F3D44"></div><div class="a" style="left:425px;top:20px;width:2px;height:787px;background:#45434B"></div>
<svg class="a" style="left:428px;top:26px" width="10" height="5" viewBox="0 0 10 5"><path d="M0 5 H10 L5 0 Z" fill="#9C9C9C"/></svg>
<div class="a" style="left:429px;top:288px;width:9px;height:32px;background:#6C6B6E"></div>
<div class="a" style="left:443px;top:0;width:6px;height:807px;background:#2F2D32"></div><div class="a" style="left:442px;top:0;width:1px;height:20px;background:#2F2D32"></div>
<!-- tab strip -->
<div class="a" style="left:449px;top:0;width:651px;height:19px;background:#2D2A2F"></div><div class="a" style="left:533px;top:15px;width:567px;height:3px;background:#252227"></div>
<div class="a" style="left:449px;top:0;width:84px;height:19px;background:#0E7DD3"></div>
<div class="a" style="left:449px;top:18px;width:651px;height:3px;background:#1F7FCF"></div>
<div class="a" style="left:454px;top:-1px;height:17px;line-height:17px;font-size:12.8px;color:#F4FAFF;white-space:pre">FightProp</div>
<svg class="a" style="left:518px;top:3px" width="10" height="9" viewBox="0 0 10 9"><path d="M0.8 0.8 L9.2 8.2 M9.2 0.8 L0.8 8.2" stroke="#FFFFFF" stroke-width="1.4"/></svg>
<!-- editor -->
<div class="a" style="left:449px;top:21px;width:651px;height:640px;background:#211F22;overflow:hidden">
<div class="a" style="left:0;top:0;width:17px;height:640px;background:#353337"></div>
<div class="a" style="left:74px;top:0;width:1px;height:640px;background-image:linear-gradient(#4A484C 50%,transparent 50%);background-size:1px 4px"></div>
<div class="a" style="left:102px;top:45px;width:1px;height:116px;background-image:linear-gradient(#3C3A3E 50%,transparent 50%);background-size:1px 2px"></div><div class="a" style="left:131px;top:74px;width:1px;height:16px;background-image:linear-gradient(#3C3A3E 50%,transparent 50%);background-size:1px 2px"></div><div class="a" style="left:131px;top:132px;width:1px;height:16px;background-image:linear-gradient(#3C3A3E 50%,transparent 50%);background-size:1px 2px"></div><div class="a" style="left:102px;top:264px;width:1px;height:116px;background-image:linear-gradient(#3C3A3E 50%,transparent 50%);background-size:1px 2px"></div><div class="a" style="left:131px;top:293px;width:1px;height:16px;background-image:linear-gradient(#3C3A3E 50%,transparent 50%);background-size:1px 2px"></div><div class="a" style="left:131px;top:351px;width:1px;height:16px;background-image:linear-gradient(#3C3A3E 50%,transparent 50%);background-size:1px 2px"></div><div class="a" style="left:102px;top:483px;width:1px;height:116px;background-image:linear-gradient(#3C3A3E 50%,transparent 50%);background-size:1px 2px"></div><div class="a" style="left:131px;top:512px;width:1px;height:16px;background-image:linear-gradient(#3C3A3E 50%,transparent 50%);background-size:1px 2px"></div><div class="a" style="left:131px;top:570px;width:1px;height:16px;background-image:linear-gradient(#3C3A3E 50%,transparent 50%);background-size:1px 2px"></div>
<div class="a" style="left:69px;top:32px;width:600px;height:13px;box-sizing:border-box;border:2px solid #4A4A4A;border-right:none"></div>
<div class="cl t" style="top:0px;height:16px"><span class="lnn">339</span><span class="ct"><span class="cm">// (set) Token: 0x060008C7 RID: 2247 RVA: 0x00037840 File Offset: 0x00035A40</span></span></div><div class="cl t" style="top:16px;height:16px"><span class="lnn">340</span><span class="ct"><span class="kw">public override int </span><span class="pp">Att_absolute_value</span></span></div><div class="cl" style="top:32px;height:13px"><span class="lnn">341</span><span class="ct"><span class="pu">{</span></span></div><div class="cl t" style="top:45px;height:16px"><span class="lnn">342</span><span class="ct"><span class="kw">    get</span></span></div><div class="cl" style="top:61px;height:13px"><span class="lnn">343</span><span class="ct"><span class="pu">    {</span></span></div><div class="cl t" style="top:74px;height:16px"><span class="lnn">344</span><span class="ct"><span class="kw">        return this</span><span class="pu">.</span><span class="fd">m_EncryptProp</span><span class="pu">.</span><span class="me">Decode</span><span class="pu">(</span><span class="kw">this</span><span class="pu">.</span><span class="fd">att_absolute_value</span><span class="pu">);</span></span></div><div class="cl" style="top:90px;height:13px"><span class="lnn">345</span><span class="ct"><span class="pu">    }</span></span></div><div class="cl t" style="top:103px;height:16px"><span class="lnn">346</span><span class="ct"><span class="kw">    set</span></span></div><div class="cl" style="top:119px;height:13px"><span class="lnn">347</span><span class="ct"><span class="pu">    {</span></span></div><div class="cl t" style="top:132px;height:16px"><span class="lnn">348</span><span class="ct"><span class="kw">        this</span><span class="pu">.</span><span class="fd">att_absolute_value</span><span class="pu"> = </span><span class="kw">this</span><span class="pu">.</span><span class="fd">m_EncryptProp</span><span class="pu">.</span><span class="me">Encode</span><span class="pu">(</span><span class="va">value</span><span class="pu">);</span></span></div><div class="cl" style="top:148px;height:13px"><span class="lnn">349</span><span class="ct"><span class="pu">    }</span></span></div><div class="cl" style="top:161px;height:13px"><span class="lnn">350</span><span class="ct"><span class="pu">}</span></span></div><div class="cl" style="top:174px;height:13px"><span class="lnn">351</span><span class="ct"></span></div><div class="cl t" style="top:187px;height:16px"><span class="lnn">352</span><span class="ct"><span class="cm">// Token: 0x170000B3 RID: 179</span></span></div><div class="cl t" style="top:203px;height:16px"><span class="lnn">353</span><span class="ct"><span class="cm">// (get) Token: 0x060008C8 RID: 2248 RVA: 0x00037854 File Offset: 0x00035A54</span></span></div><div class="cl t" style="top:219px;height:16px"><span class="lnn">354</span><span class="ct"><span class="cm">// (set) Token: 0x060008C9 RID: 2249 RVA: 0x00037868 File Offset: 0x00035A68</span></span></div><div class="cl t" style="top:235px;height:16px"><span class="lnn">355</span><span class="ct"><span class="kw">public override int </span><span class="pp">Att_attach_per</span></span></div><div class="cl" style="top:251px;height:13px"><span class="lnn">356</span><span class="ct"><span class="pu">{</span></span></div><div class="cl t" style="top:264px;height:16px"><span class="lnn">357</span><span class="ct"><span class="kw">    get</span></span></div><div class="cl" style="top:280px;height:13px"><span class="lnn">358</span><span class="ct"><span class="pu">    {</span></span></div><div class="cl t" style="top:293px;height:16px"><span class="lnn">359</span><span class="ct"><span class="kw">        return this</span><span class="pu">.</span><span class="fd">m_EncryptProp</span><span class="pu">.</span><span class="me">Decode</span><span class="pu">(</span><span class="kw">this</span><span class="pu">.</span><span class="fd">att_attach_per</span><span class="pu">);</span></span></div><div class="cl" style="top:309px;height:13px"><span class="lnn">360</span><span class="ct"><span class="pu">    }</span></span></div><div class="cl t" style="top:322px;height:16px"><span class="lnn">361</span><span class="ct"><span class="kw">    set</span></span></div><div class="cl" style="top:338px;height:13px"><span class="lnn">362</span><span class="ct"><span class="pu">    {</span></span></div><div class="cl t" style="top:351px;height:16px"><span class="lnn">363</span><span class="ct"><span class="kw">        this</span><span class="pu">.</span><span class="fd">att_attach_per</span><span class="pu"> = </span><span class="kw">this</span><span class="pu">.</span><span class="fd">m_EncryptProp</span><span class="pu">.</span><span class="me">Encode</span><span class="pu">(</span><span class="va">value</span><span class="pu">);</span></span></div><div class="cl" style="top:367px;height:13px"><span class="lnn">364</span><span class="ct"><span class="pu">    }</span></span></div><div class="cl" style="top:380px;height:13px"><span class="lnn">365</span><span class="ct"><span class="pu">}</span></span></div><div class="cl" style="top:393px;height:13px"><span class="lnn">366</span><span class="ct"></span></div><div class="cl t" style="top:406px;height:16px"><span class="lnn">367</span><span class="ct"><span class="cm">// Token: 0x170000B4 RID: 180</span></span></div><div class="cl t" style="top:422px;height:16px"><span class="lnn">368</span><span class="ct"><span class="cm">// (get) Token: 0x060008CA RID: 2250 RVA: 0x0003787C File Offset: 0x00035A7C</span></span></div><div class="cl t" style="top:438px;height:16px"><span class="lnn">369</span><span class="ct"><span class="cm">// (set) Token: 0x060008CB RID: 2251 RVA: 0x00037890 File Offset: 0x00035A90</span></span></div><div class="cl t" style="top:454px;height:16px"><span class="lnn">370</span><span class="ct"><span class="kw">public override int </span><span class="pp">Def_absolute_value</span></span></div><div class="cl" style="top:470px;height:13px"><span class="lnn">371</span><span class="ct"><span class="pu">{</span></span></div><div class="cl t" style="top:483px;height:16px"><span class="lnn">372</span><span class="ct"><span class="kw">    get</span></span></div><div class="cl" style="top:499px;height:13px"><span class="lnn">373</span><span class="ct"><span class="pu">    {</span></span></div><div class="cl t" style="top:512px;height:16px"><span class="lnn">374</span><span class="ct"><span class="kw">        return this</span><span class="pu">.</span><span class="fd">m_EncryptProp</span><span class="pu">.</span><span class="me">Decode</span><span class="pu">(</span><span class="kw">this</span><span class="pu">.</span><span class="fd">def_absolute_value</span><span class="pu">);</span></span></div><div class="cl" style="top:528px;height:13px"><span class="lnn">375</span><span class="ct"><span class="pu">    }</span></span></div><div class="cl t" style="top:541px;height:16px"><span class="lnn">376</span><span class="ct"><span class="kw">    set</span></span></div><div class="cl" style="top:557px;height:13px"><span class="lnn">377</span><span class="ct"><span class="pu">    {</span></span></div><div class="cl t" style="top:570px;height:16px"><span class="lnn">378</span><span class="ct"><span class="kw">        this</span><span class="pu">.</span><span class="fd">def_absolute_value</span><span class="pu"> = </span><span class="kw">this</span><span class="pu">.</span><span class="fd">m_EncryptProp</span><span class="pu">.</span><span class="me">Encode</span><span class="pu">(</span><span class="va">value</span><span class="pu">);</span></span></div><div class="cl" style="top:586px;height:13px"><span class="lnn">379</span><span class="ct"><span class="pu">    }</span></span></div><div class="cl" style="top:599px;height:13px"><span class="lnn">380</span><span class="ct"><span class="pu">}</span></span></div><div class="cl" style="top:612px;height:13px"><span class="lnn">381</span><span class="ct"></span></div><div class="cl t" style="top:625px;height:16px"><span class="lnn">382</span><span class="ct"><span class="cm">// Token: 0x170000B5 RID: 181</span></span></div><div class="cl t" style="top:641px;height:16px"><span class="lnn">383</span><span class="ct"><span class="cm">// (get) Token: 0x060008CC RID: 2252 RVA: 0x000378A4 File Offset: 0x00035AA4</span></span></div>
<div class="a" style="left:106px;top:34px;width:1px;height:11px;background:#F0F0F0"></div>
</div>
<div class="a" style="left:517px;top:194px;width:583px;height:1px;background:#B0B0B0"></div><div class="a" style="left:517px;top:413px;width:583px;height:1px;background:#B0B0B0"></div><div class="a" style="left:517px;top:632px;width:583px;height:1px;background:#B0B0B0"></div>
<!-- zoom bar / hscroll -->
<div class="a" style="left:449px;top:660px;width:651px;height:1px;background:#1C1A1E"></div>
<div class="a" style="left:449px;top:661px;width:651px;height:16px;background:#413F46"></div>
<div class="a" style="left:449px;top:674px;width:651px;height:3px;background:#48464D"></div>
<div class="a" style="left:449px;top:661px;width:48px;height:16px;background:#262428;box-sizing:border-box;border:1px solid #3A383E"></div>
<div class="a" style="left:454px;top:662px;line-height:16px;font-size:11px;color:#F0F0F0;white-space:pre;word-spacing:1.5px">100 %</div>
<div class="a" style="left:497px;top:661px;width:11px;height:16px;background:#221F24"></div>
<svg class="a" style="left:500px;top:668px" width="6" height="4" viewBox="0 0 6 4"><path d="M0 0 H6 L3 4 Z" fill="#E0E0E0"/></svg>
<svg class="a" style="left:513px;top:665px" width="7" height="9" viewBox="0 0 7 9"><path d="M7 0 V9 L0 4.5 Z" fill="#5E5C62"/></svg>
<!-- splitter -->
<div class="a" style="left:449px;top:677px;width:651px;height:7px;background:#2B292E"></div>
<div class="a" style="left:449px;top:684px;width:651px;height:1px;background:#48464B"></div>
<!-- search title -->
<div class="a" style="left:449px;top:685px;width:651px;height:23px;background:#2D2B30"></div>
<svg class="a" style="left:453px;top:690px" width="27" height="14" viewBox="0 0 27 14"><g fill="none" stroke="#EAEAEA" stroke-width="1.15">
<path d="M0.8 4 H4.6 M2.7 1.2 V12 L1.6 12.8 M0.6 9.2 L4.6 7.6"/>
<path d="M6 1.8 L7 1.3 V6 H11.6 V1.3 L12.6 1.8 M7 3.6 H11.6 M9.3 0.8 V6 M6.2 7.4 H11.8 L7.2 12.8 M7.6 8.6 L12.6 12.8"/>
<path d="M19.2 0.6 V2.6 M14.4 2.2 H24 M14 4.4 V3.6 H24.6 V4.4 M17.6 5 L20 6.4 L16 8.8 H22.6 M22 7.6 L23.2 8.6 M19.4 8.8 V13 M17.4 10.6 L15 12.8 M21.4 10.6 L24 12.8"/>
</g></svg>
<div class="a" style="left:488px;top:696px;width:612px;height:8px;background-image:repeating-linear-gradient(-45deg,#39373C 0 1.2px,#2A282D 1.2px 2.9px);"></div>
<div class="a" style="left:449px;top:708px;width:651px;height:1px;background:#48464B"></div>
<!-- search box -->
<div class="a" style="left:449px;top:709px;width:651px;height:25px;background:#333136"></div>
<div class="a" style="left:453px;top:714px;line-height:17px;font-size:12.4px;color:#F1F1F1;white-space:pre">get_Att_absolute_value</div>
<div class="a" style="left:449px;top:734px;width:651px;height:1px;background:#4E4C52"></div>
<!-- results -->
<div class="a" style="left:449px;top:735px;width:651px;height:72px;background:#262428"></div>
<div class="a" style="left:449px;top:735px;width:651px;height:21px;background:#3D3C45"></div>
<div class="a" style="left:449px;top:755px;width:651px;height:1px;background:#57555B"></div>
<div class="a" style="left:457px;top:739px"><svg class="ic" width="11" height="11" viewBox="0 0 11 11"><path d="M5.5 1.1 L9.6 3.4 L9.6 7.9 L5.5 10.2 L1.4 7.9 L1.4 3.4 Z" fill="#2F1E5E" stroke="#B39AE4" stroke-width="1"/><path d="M1.8 3.6 L5.5 5.7 L9.2 3.6 M5.5 5.7 L5.5 9.8" fill="none" stroke="#B39AE4" stroke-width="0.9"/></svg></div>
<div class="a" style="left:475px;top:738px;line-height:17px;font-size:12.4px;color:#E5A15A;white-space:pre">get_Att_absolute_value</div>
<div class="a" style="left:457px;top:760px"><svg class="ic" width="11" height="11" viewBox="0 0 11 11"><path d="M5.5 1.1 L9.6 3.4 L9.6 7.9 L5.5 10.2 L1.4 7.9 L1.4 3.4 Z" fill="#2F1E5E" stroke="#B39AE4" stroke-width="1"/><path d="M1.8 3.6 L5.5 5.7 L9.2 3.6 M5.5 5.7 L5.5 9.8" fill="none" stroke="#B39AE4" stroke-width="0.9"/></svg></div>
<div class="a" style="left:475px;top:759px;line-height:17px;font-size:12.4px;color:#E5A15A;white-space:pre">get_Att_absolute_value</div>
<svg class="a" style="left:1008px;top:760px" width="32" height="32" viewBox="0 0 32 32"><g stroke="#B8B8B8" stroke-width="2" fill="none" stroke-linecap="round">
<path d="M16 1.5 V30.5 M3.4 8.7 L28.6 23.3 M3.4 23.3 L28.6 8.7"/>
<path d="M12.5 3.5 L16 7 L19.5 3.5 M12.5 28.5 L16 25 L19.5 28.5 M2.6 13.4 L7.6 12 L6.2 7 M29.4 18.6 L24.4 20 L25.8 25 M2.6 18.6 L7.6 20 L6.2 25 M29.4 13.4 L24.4 12 L25.8 7"/>
</g><circle cx="16" cy="16" r="2.6" fill="#262428" stroke="#B8B8B8" stroke-width="1.6"/></svg>
<svg class="a" style="left:1043px;top:766px" width="40" height="21" viewBox="0 0 40 21"><g stroke="#B4B4B4" stroke-width="1.4" fill="none">
<path d="M13.5 1.2 L3 3 M3 4.8 H15 M1 7.8 H17 M9 3.2 L1.2 14.5 M6.5 10.2 H15 V19.6 H6.5 Z M6.5 13.2 H15 M6.5 16.4 H15"/>
<path d="M22 1.6 H37 M20.6 6.6 V4.2 H38.4 V6.6 M29.5 1.6 V9.6 M23.4 6.4 L26 7.2 M23.4 8.8 L26 9.6 M32.8 6.4 L35.4 7.2 M32.8 8.8 L35.4 9.6 M22 12.2 H36.2 V19.2 M23 15.6 H36 M21 19.2 H36.4"/>
</g></svg>
<!-- red boxes -->
<svg class="a" style="left:0;top:0" width="1100" height="807">
<g fill="none" stroke="#E8413C" stroke-width="3.5">
<rect x="11.75" y="137.75" width="326.5" height="60.5"/>
<rect x="8.75" y="275.75" width="333.5" height="55.5"/>
<rect x="545.75" y="37.75" width="475.5" height="79.5"/>
<rect x="542.75" y="476.75" width="470.5" height="84.5"/>
<rect x="448.75" y="734.25" width="174.5" height="20.75"/>
</g>
</svg>
</body></html>
